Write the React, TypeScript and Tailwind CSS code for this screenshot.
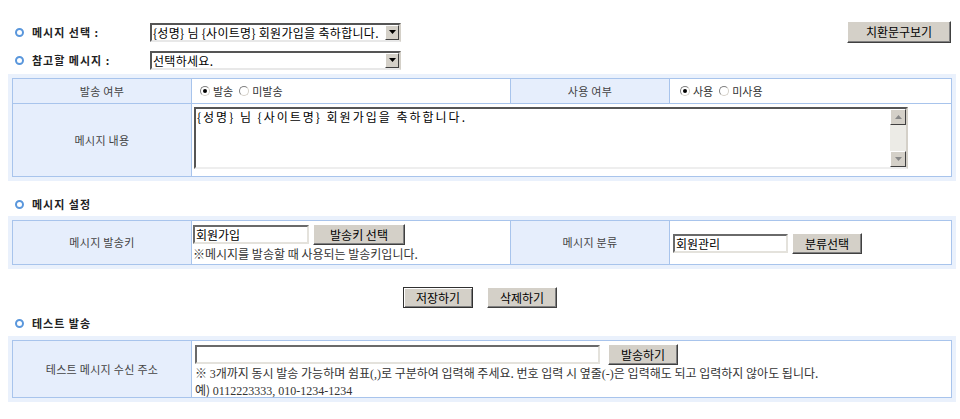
import React from "react";

const Bullet = () => (
	<span className="inline-block w-[9px] h-[9px] rounded-full border-2 border-[#5a97dc] bg-white shrink-0" />
);

const SectionTitle = ({ text }: { text: string }) => (
	<div className="flex items-center gap-[8px] pl-[15px] font-bold text-[11px] tracking-[1px] text-[#222]">
		<Bullet />
		<span>{text}</span>
	</div>
);

const WinButton = ({
	label,
	w,
	h = "h-[21px]",
	dark = false,
}: {
	label: string;
	w: string;
	h?: string;
	dark?: boolean;
}) => (
	<button
		type="button"
		className={`${w} ${h} shrink-0 flex items-center justify-center bg-[#d4d0c8] text-[12px] text-black border ${
			dark
				? "border-[#303030] shadow-[inset_1px_1px_0_#fff,inset_-1px_-1px_0_#808080]"
				: "border-t-white border-l-white border-r-[#404040] border-b-[#404040] shadow-[inset_-1px_-1px_0_#808080]"
		}`}
	>
		{label}
	</button>
);

const SelectBox = ({ value }: { value: string }) => (
	<div className="w-[251px] h-[19px] flex items-center bg-white border-2 border-t-[#555] border-l-[#555] border-r-[#d4d0c8] border-b-[#e8e8e8]">
		<span className="flex-1 min-w-0 pl-[1px] text-[12px] tracking-[0.3px] text-black whitespace-nowrap leading-[15px]">
			{value}
		</span>
		<span className="w-[14px] h-[15px] shrink-0 flex items-center justify-center bg-[#d4d0c8] border border-t-white border-l-white border-r-[#404040] border-b-[#404040]">
			<svg width="7" height="4" viewBox="0 0 7 4">
				<path d="M0 0h7L3.5 4z" fill="#000" />
			</svg>
		</span>
	</div>
);

const TextInput = ({ value, w }: { value?: string; w: string }) => (
	<div
		className={`${w} h-[19px] shrink-0 flex items-center bg-white border-2 border-t-[#6a6a6a] border-l-[#6a6a6a] border-r-[#e4e2dc] border-b-[#e4e2dc] text-[12px] text-black leading-[15px] pl-[1px]`}
	>
		{value}
	</div>
);

const Radio = ({ checked, label }: { checked?: boolean; label: string }) => (
	<span className="inline-flex items-center gap-[3px]">
		<span className="w-[10px] h-[10px] rounded-full border border-t-[#808080] border-l-[#808080] border-r-[#d4d0c8] border-b-[#d4d0c8] bg-white flex items-center justify-center">
			{checked ? <span className="w-[4px] h-[4px] rounded-full bg-black" /> : null}
		</span>
		<span>{label}</span>
	</span>
);

const Label = ({ text }: { text: string }) => (
	<div className="bg-[#e6eefc] flex items-center justify-center text-[11px] tracking-[0.3px] text-[#444]">
		{text}
	</div>
);

const Serif = ({ children }: { children: React.ReactNode }) => (
	<span className="font-['Liberation_Serif',serif]">{children}</span>
);

const App = () => {
	return (
		<div className="w-[960px] h-[419px] bg-white font-['Noto_Sans_CJK_KR',sans-serif] text-[11px] text-[#333] pt-[18px]">
			<div className="flex items-center h-[28px]">
				<div className="w-[150px]">
					<SectionTitle text="메시지 선택 :" />
				</div>
				<SelectBox value="{성명} 님 {사이트명} 회원가입을 축하합니다." />
				<div className="ml-auto mr-[9px]">
					<WinButton label="치환문구보기" w="w-[104px]" h="h-[22px]" />
				</div>
			</div>
			<div className="flex items-center h-[28px]">
				<div className="w-[150px]">
					<SectionTitle text="참고할 메시지 :" />
				</div>
				<SelectBox value="선택하세요." />
			</div>

			<div className="mx-[8px] w-[948px] bg-[#eaf1fc] p-[4px]">
				<div className="grid grid-cols-[178px_318px_158px_281px] grid-rows-[24px_72px] gap-px bg-[#a8c4ec] p-px">
					<Label text="발송 여부" />
					<div className="bg-white flex items-center gap-[6px] pl-[8px] text-[11px] text-[#333]">
						<Radio checked label="발송" />
						<Radio label="미발송" />
					</div>
					<Label text="사용 여부" />
					<div className="bg-white flex items-center gap-[6px] pl-[10px] text-[11px] text-[#333]">
						<Radio checked label="사용" />
						<Radio label="미사용" />
					</div>
					<Label text="메시지 내용" />
					<div className="col-span-3 bg-white pl-[2px] pt-[3px]">
						<div className="w-[714px] h-[62px] flex border-2 border-t-[#555] border-l-[#555] border-r-[#d4d0c8] border-b-[#eeeeee] bg-white">
							<div className="flex-1 pl-[1px] text-[12px] tracking-[2px] text-black leading-[15px]">
								{"{성명} 님 {사이트명} 회원가입을 축하합니다."}
							</div>
							<div className="w-[16px] flex flex-col bg-[#ecebe6]">
								<span className="w-[16px] h-[16px] flex items-center justify-center bg-[#d4d0c8] border border-t-white border-l-white border-r-[#404040] border-b-[#404040]">
									<svg width="7" height="4" viewBox="0 0 7 4">
										<path d="M0 4h7L3.5 0z" fill="#888" />
									</svg>
								</span>
								<span className="flex-1" />
								<span className="w-[16px] h-[16px] flex items-center justify-center bg-[#d4d0c8] border border-t-white border-l-white border-r-[#404040] border-b-[#404040]">
									<svg width="7" height="4" viewBox="0 0 7 4">
										<path d="M0 0h7L3.5 4z" fill="#888" />
									</svg>
								</span>
							</div>
						</div>
					</div>
				</div>
			</div>

			<div className="mt-[11px] h-[24px] flex items-center">
				<SectionTitle text="메시지 설정" />
			</div>

			<div className="mx-[8px] w-[948px] bg-[#eaf1fc] p-[4px]">
				<div className="grid grid-cols-[178px_318px_158px_281px] grid-rows-[43px] gap-px bg-[#a8c4ec] p-px">
					<Label text="메시지 발송키" />
					<div className="bg-white pl-[1px] pt-[3px]">
						<div className="flex items-center gap-[4px]">
							<TextInput value="회원가입" w="w-[116px]" />
							<WinButton label="발송키 선택" w="w-[92px]" />
						</div>
						<div className="text-[12px] text-[#333] leading-[15px] mt-[1px]">
							※메시지를 발송할 때 사용되는 발송키입니다.
						</div>
					</div>
					<Label text="메시지 분류" />
					<div className="bg-white flex items-center gap-[4px] pl-[3px] pt-[2px]">
						<TextInput value="회원관리" w="w-[115px]" />
						<WinButton label="분류선택" w="w-[70px]" />
					</div>
				</div>
			</div>

			<div className="mt-[18px] flex justify-center gap-[14px]">
				<WinButton label="저장하기" w="w-[70px]" dark />
				<WinButton label="삭제하기" w="w-[70px]" />
			</div>

			<div className="mt-[3px] h-[25px] flex items-center">
				<SectionTitle text="테스트 발송" />
			</div>

			<div className="mx-[8px] w-[948px] bg-[#eaf1fc] p-[4px]">
				<div className="grid grid-cols-[178px_1fr] grid-rows-[56px] gap-px bg-[#a8c4ec] p-px">
					<Label text="테스트 메시지 수신 주소" />
					<div className="bg-white pl-[3px] pt-[3px]">
						<div className="flex items-center gap-[8px]">
							<TextInput w="w-[405px]" />
							<WinButton label="발송하기" w="w-[70px]" />
						</div>
						<div className="text-[12px] text-[#333] leading-[15px] whitespace-nowrap">
							※ <Serif>3</Serif>개까지 동시 발송 가능하며 쉼표<Serif>(,)</Serif>로 구분하여 입력해 주세요. 번호 입력 시 옆줄
							<Serif>(-)</Serif>은 입력해도 되고 입력하지 않아도 됩니다.
						</div>
						<div className="text-[12px] text-[#333] leading-[15px]">
							예) <span className="font-['Liberation_Serif',serif]">0112223333, 010-1234-1234</span>
						</div>
					</div>
				</div>
			</div>
		</div>
	);
};

export default App;
